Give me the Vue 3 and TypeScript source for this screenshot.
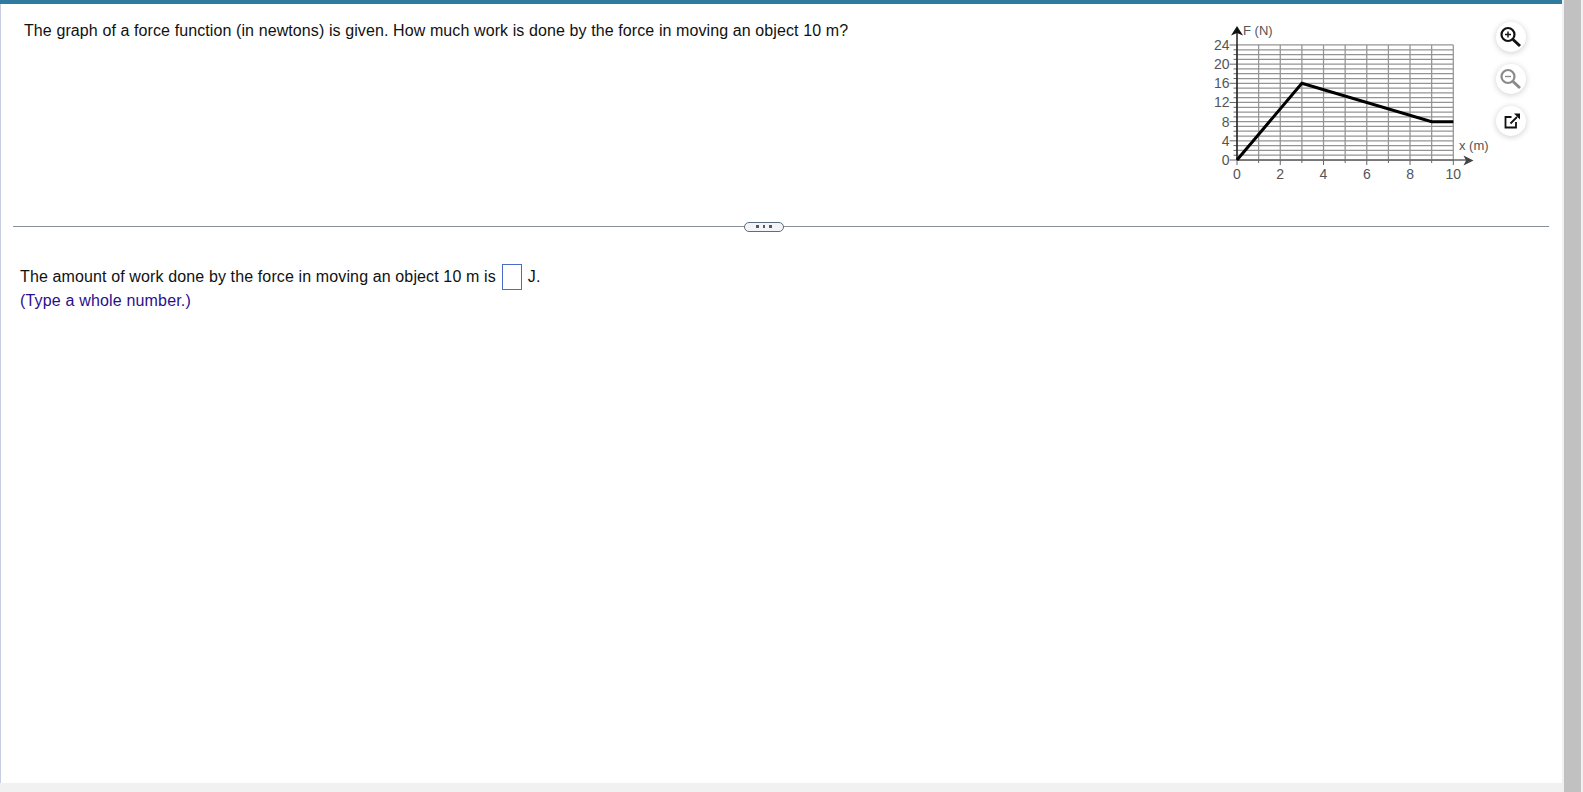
<script setup lang="ts">
const x0 = 1237
const y0 = 160
const ux = 21.63
const uy = 4.792
const px = (v: number) => x0 + v * ux
const py = (v: number) => y0 - v * uy
const xs = Array.from({ length: 11 }, (_, i) => i)
const ys = Array.from({ length: 25 }, (_, i) => i)
const xLabels = [0, 2, 4, 6, 8, 10]
const yLabels = [0, 4, 8, 12, 16, 20, 24]
const curve = [[0, 0], [3, 16], [9, 8], [10, 8]].map(([a, b]) => `${px(a)},${py(b)}`).join(' ')
</script>

<template>
  <div class="screen">
    <div class="page">
      <div class="topbar"></div>
      <div class="sheet">
        <section class="question">
          <p class="prompt">The graph of a force function (in newtons) is given. How much work is done by the force in moving an object 10 m?</p>
          <svg class="graph" width="290" height="175" viewBox="1200 15 290 175">
            <g stroke="#949494" stroke-width="1.25">
              <line v-for="v in ys" :key="'h' + v" :x1="x0" :x2="px(10)" :y1="py(v)" :y2="py(v)" />
              <line v-for="v in xs" :key="'v' + v" :x1="px(v)" :x2="px(v)" :y1="py(24)" :y2="y0" />
            </g>
            <g stroke="#666" stroke-width="1">
              <line v-for="v in ys" :key="'ty' + v" :x1="x0 - (v % 4 === 0 ? 7.5 : 3.5)" :x2="x0" :y1="py(v)" :y2="py(v)" />
              <line v-for="v in xs" :key="'tx' + v" :x1="px(v)" :x2="px(v)" :y1="y0" :y2="y0 + (v % 2 === 0 ? 5 : 3)" />
              <line :x1="x0" :x2="1468" :y1="y0" :y2="y0" stroke-width="1.5" />
            </g>
            <line :x1="x0" :x2="x0" y1="160" y2="32" stroke="#222" stroke-width="1.5" />
            <path d="M1237 26 L1243 35.5 L1237 33 L1231 35.5 Z" fill="#111" />
            <path d="M1473.5 160.5 L1463.5 155.5 L1466 160.5 L1463.5 165.5 Z" fill="#444" />
            <polyline :points="curve" fill="none" stroke="#000" stroke-width="3" stroke-linejoin="miter" />
            <g class="axis-text">
              <text x="1243" y="35">F (N)</text>
              <text x="1459" y="150">x (m)</text>
              <text v-for="v in yLabels" :key="'ly' + v" class="tick" x="1229.5" :y="py(v) + 5" text-anchor="end">{{ v }}</text>
              <text v-for="v in xLabels" :key="'lx' + v" class="tick" :x="px(v)" y="179" text-anchor="middle">{{ v }}</text>
            </g>
          </svg>
          <div class="tools">
            <button class="tool" aria-label="Zoom in">
              <svg width="24" height="24" viewBox="0 0 24 24" fill="none" stroke="#111">
                <circle cx="9" cy="9.5" r="6.5" stroke-width="2.2" />
                <path d="M14 14.5 L21 21" stroke-width="3" />
                <path d="M6 9.5 H12 M9 6.5 V12.5" stroke-width="1.4" />
              </svg>
            </button>
            <button class="tool" aria-label="Zoom out">
              <svg width="24" height="24" viewBox="0 0 24 24" fill="none" stroke="#8a8a8a">
                <circle cx="9" cy="9.5" r="6.5" stroke-width="2.2" />
                <path d="M14 14.5 L21 21" stroke-width="3" />
                <path d="M6 9.5 H12" stroke-width="1.4" />
              </svg>
            </button>
            <button class="tool" aria-label="Open in new window">
              <svg width="24" height="24" viewBox="0 0 24 24" fill="none" stroke="#111">
                <path d="M12.5 8 H6.5 V18.5 H17 V13" stroke-width="1.8" />
                <path d="M11.5 14.5 L18 8" stroke-width="1.8" />
                <path d="M15 4.5 H21 V10.5 Z" fill="#111" stroke="none" />
              </svg>
            </button>
          </div>
        </section>
        <div class="divider">
          <span class="pill"><i></i><i></i><i></i></span>
        </div>
        <section class="answer">
          <p class="line">The amount of work done by the force in moving an object 10 m is<span class="box"></span>J.</p>
          <p class="hint">(Type a whole number.)</p>
        </section>
      </div>
      <div class="footer"></div>
    </div>
    <div class="scrollbar"><div class="thumb"></div></div>
  </div>
</template>

<style>
html, body { margin: 0; background: #fff; overflow: hidden; }
</style>

<style scoped>
.screen {
  width: 1583px;
  height: 792px;
  display: flex;
  overflow: hidden;
  font-family: "Liberation Sans", Arial, sans-serif;
  color: #111;
}
.page {
  width: 1562px;
  display: flex;
  flex-direction: column;
}
.topbar {
  height: 4px;
  background: #2f7a9f;
}
.sheet {
  flex: 1;
  border-left: 1px solid #c8cde2;
  background: #fff;
}
.footer {
  height: 9px;
  background: #f1f1f1;
}
.question {
  display: flex;
  align-items: flex-start;
  height: 222px;
  padding-top: 11px;
  box-sizing: border-box;
}
.prompt {
  margin: 0;
  width: 1176px;
  padding: 4px 0 0 23px;
  font-size: 16px;
  line-height: 24px;
  letter-spacing: 0.1px;
}
.graph {
  flex: none;
  display: block;
}
.axis-text text {
  font-size: 13px;
  fill: #555;
  font-family: "Liberation Sans", Arial, sans-serif;
}
.axis-text .tick {
  font-size: 14px;
}
.tools {
  display: flex;
  flex-direction: column;
  gap: 12px;
  margin: 7px 0 0 6px;
}
.tool {
  width: 30px;
  height: 30px;
  padding: 0;
  border: none;
  border-radius: 50%;
  background: #fff;
  box-shadow: 0 1px 6px rgba(0, 0, 0, 0.2);
  display: flex;
  align-items: center;
  justify-content: center;
}
.divider {
  height: 1px;
  margin: 0 13px 0 12px;
  background: #8a909a;
  display: flex;
  justify-content: center;
  align-items: center;
  padding-right: 34px;
}
.pill {
  width: 38px;
  height: 8px;
  border: 1.5px solid #5d6d7e;
  border-radius: 6px;
  background: #f2f4f7;
  display: flex;
  align-items: center;
  justify-content: center;
  gap: 4px;
}
.pill i {
  width: 2.5px;
  height: 2.5px;
  background: #4d5a68;
}
.answer {
  padding: 38px 0 0 19px;
  font-size: 16px;
  line-height: 24px;
}
.line, .hint {
  margin: 0;
}
.line {
  display: flex;
  align-items: center;
  height: 24px;
  letter-spacing: 0.125px;
}
.box {
  flex: none;
  width: 18px;
  height: 24px;
  margin: 0 6px 0 6px;
  border: 1px solid #4a6cc9;
  background: #fff;
}
.hint {
  color: #2a0f8c;
  letter-spacing: 0.17px;
}
.scrollbar {
  flex: 1;
  background: #f1f1f1;
  padding: 0 2px;
}
.thumb {
  height: 100%;
  background: #c1c1c1;
}
</style>
